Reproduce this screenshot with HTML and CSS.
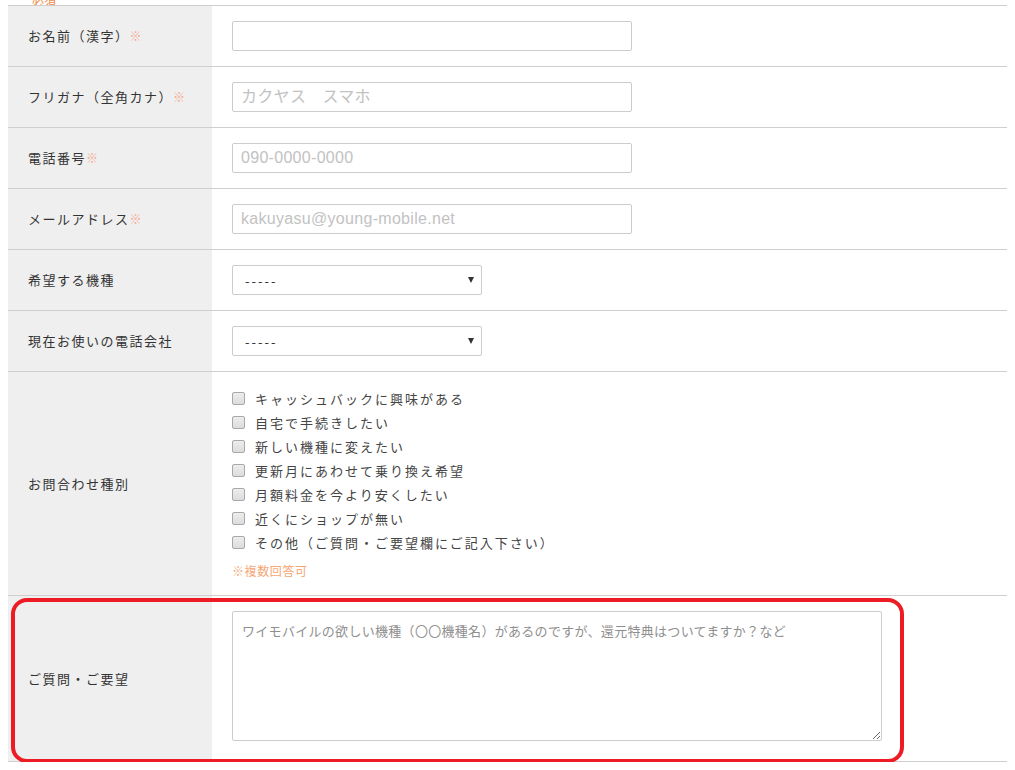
FILE: index.html
```html
<!DOCTYPE html>
<html lang="ja">
<head>
<meta charset="utf-8">
<title>お問い合わせフォーム</title>
<link rel="stylesheet" href="styles.css">
</head>
<body>
<div class="top-note"><span>必須</span></div>
<form class="form">
  <div class="row">
    <div class="label">お名前（漢字）<span class="req">※</span></div>
    <div class="field"><input class="text" type="text"></div>
  </div>
  <div class="row">
    <div class="label">フリガナ（全角カナ）<span class="req">※</span></div>
    <div class="field"><input class="text" type="text" placeholder="カクヤス　スマホ"></div>
  </div>
  <div class="row">
    <div class="label">電話番号<span class="req">※</span></div>
    <div class="field"><input class="text" type="text" placeholder="090-0000-0000"></div>
  </div>
  <div class="row">
    <div class="label">メールアドレス<span class="req">※</span></div>
    <div class="field"><input class="text" type="text" placeholder="kakuyasu@young-mobile.net"></div>
  </div>
  <div class="row">
    <div class="label">希望する機種</div>
    <div class="field">
      <span class="select-wrap"><select class="select"><option>-----</option></select></span>
    </div>
  </div>
  <div class="row">
    <div class="label">現在お使いの電話会社</div>
    <div class="field">
      <span class="select-wrap"><select class="select"><option>-----</option></select></span>
    </div>
  </div>
  <div class="row">
    <div class="label">お問合わせ種別</div>
    <div class="field field-checks">
      <ul class="checks">
        <li><label><input class="check" type="checkbox">キャッシュバックに興味がある</label></li>
        <li><label><input class="check" type="checkbox">自宅で手続きしたい</label></li>
        <li><label><input class="check" type="checkbox">新しい機種に変えたい</label></li>
        <li><label><input class="check" type="checkbox">更新月にあわせて乗り換え希望</label></li>
        <li><label><input class="check" type="checkbox">月額料金を今より安くしたい</label></li>
        <li><label><input class="check" type="checkbox">近くにショップが無い</label></li>
        <li><label><input class="check" type="checkbox">その他（ご質問・ご要望欄にご記入下さい）</label></li>
      </ul>
      <p class="note">※複数回答可</p>
    </div>
  </div>
  <div class="row row-last">
    <div class="label">ご質問・ご要望</div>
    <div class="field field-area">
      <textarea class="area" placeholder="ワイモバイルの欲しい機種（〇〇機種名）があるのですが、還元特典はついてますか？など"></textarea>
    </div>
    <div class="highlight"></div>
  </div>
</form>
</body>
</html>
```

FILE: styles.css
```css
* { box-sizing: border-box; }

html, body { background: #fff; }

body {
  margin: 0 8px;
  font-family: "Noto Sans CJK JP", "Noto Sans", sans-serif;
  color: #333;
}

.top-note {
  height: 5px;
  overflow: hidden;
  display: flex;
  align-items: flex-end;
  padding-left: 24px;
  color: #f08a4b;
  font-size: 12px;
  line-height: 8px;
}

.form {
  width: 1000px;
  border-top: 1px solid #cfcfcf;
}

.row {
  position: relative;
  display: grid;
  grid-template-columns: 204px 1fr;
  border-bottom: 1px solid #cfcfcf;
}

.label {
  background: #efefef;
  display: flex;
  align-items: center;
  padding-left: 20px;
  font-size: 13px;
  letter-spacing: 1.5px;
  color: #333;
  line-height: 20px;
}

.req {
  color: #f4a98e;
  font-size: 12px;
  letter-spacing: 0;
}

.field {
  padding: 15px 20px;
  display: flex;
  align-items: center;
}

.text {
  width: 400px;
  height: 30px;
  border: 1px solid #cccccc;
  border-radius: 2px;
  padding: 0 8px;
  font-family: "Liberation Sans", "Noto Sans CJK JP", sans-serif;
  font-size: 16px;
  letter-spacing: 0.3px;
  color: #333;
  background: #fff;
  outline: none;
}

.text::placeholder {
  color: #c2c2c2;
}

.select-wrap {
  position: relative;
  display: inline-block;
}

.select-wrap::after {
  content: "";
  position: absolute;
  right: 8px;
  top: 12px;
  border-left: 3px solid transparent;
  border-right: 3px solid transparent;
  border-top: 6px solid #333;
  pointer-events: none;
}

.select {
  appearance: none;
  -webkit-appearance: none;
  width: 250px;
  height: 30px;
  border: 1px solid #cccccc;
  border-radius: 2px;
  background: #fff;
  padding: 0 12px;
  font-family: "Noto Sans CJK JP", sans-serif;
  font-size: 13px;
  letter-spacing: 2px;
  color: #333;
  outline: none;
}

.field-checks {
  flex-direction: column;
  align-items: flex-start;
  padding-top: 15px;
  padding-bottom: 12px;
}

.checks {
  list-style: none;
  margin: 0;
  padding: 0;
}

.checks li {
  height: 24px;
  line-height: 24px;
  font-size: 13px;
  letter-spacing: 2px;
  color: #444;
}

.checks label {
  display: flex;
  align-items: center;
}

.check {
  appearance: none;
  -webkit-appearance: none;
  width: 13px;
  height: 13px;
  margin: 0 10px 0 0;
  border: 1px solid #a8a8a8;
  border-radius: 2px;
  background: linear-gradient(#ededed, #dcdcdc);
  position: relative;
  top: -1px;
}

.note {
  margin: 4px 0 0;
  font-size: 12px;
  line-height: 24px;
  letter-spacing: 0.6px;
  color: #f5a775;
}

.field-area {
  padding: 15px 20px 20px;
  align-items: flex-start;
}

.area {
  width: 650px;
  height: 130px;
  border: 1px solid #cccccc;
  border-radius: 2px;
  padding: 9px 9px;
  font-family: "Noto Sans CJK JP", sans-serif;
  font-size: 13px;
  line-height: 20px;
  letter-spacing: 0.3px;
  color: #333;
  resize: both;
  outline: none;
}

.area::placeholder {
  color: #8f8f8f;
}

.highlight {
  position: absolute;
  left: 3px;
  top: 2px;
  width: 893px;
  height: 165px;
  border: 4px solid #ed1c24;
  border-radius: 16px;
  pointer-events: none;
}
```
